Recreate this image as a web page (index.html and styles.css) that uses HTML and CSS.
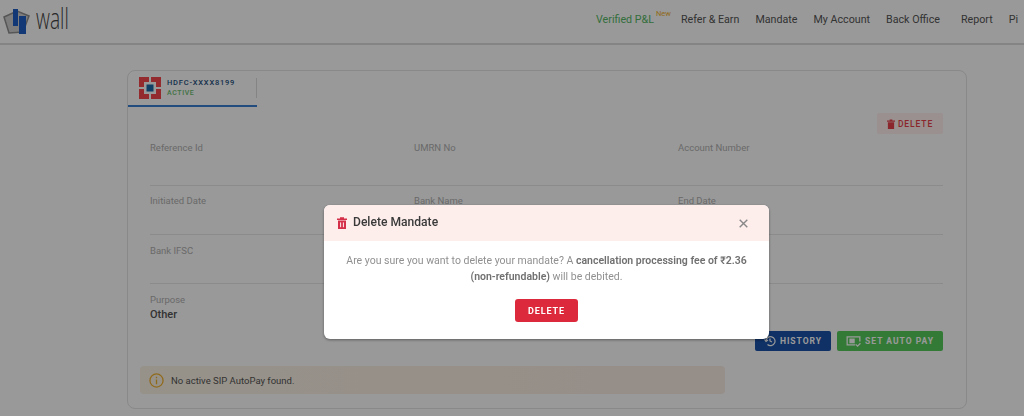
FILE: index.html
```html
<!DOCTYPE html>
<html>
<head>
<meta name="viewport" content="width=device-width, initial-scale=1.0" charset="UTF-8">
<title>Mandate</title>
<link rel="stylesheet" href="styles.css">
</head>
<body>
<div class="header">
	<div class="brand">
		<svg class="brand_logo" width="30" height="32" viewBox="0 0 30 32">
			<path d="M4 14 L17 8 L29 13 L23 29 L9 30 Z" fill="#d0d0d0" stroke="#8f8f8f" stroke-width="1.5"/>
			<rect x="13" y="6" width="5" height="17" fill="#1f5fc4"/>
			<rect x="19" y="13" width="7" height="18" fill="#1f5fc4"/>
		</svg>
		<span class="brand_name">wall</span>
	</div>
	<div class="nav">
		<a class="nav_item nav_green">Verified P&amp;L<sup class="nav_new">New</sup></a>
		<a class="nav_item">Refer &amp; Earn</a>
		<a class="nav_item">Mandate</a>
		<a class="nav_item">My Account</a>
		<a class="nav_item">Back Office</a>
		<a class="nav_item nav_report">Report</a>
		<a class="nav_item">Pi</a>
	</div>
</div>

<div class="card">
	<div class="tab">
		<svg width="22" height="22" viewBox="0 0 22 22">
			<path d="M0 0 H10 V5 H5 V10 H0 Z M12 0 H22 V10 H17 V5 H12 Z M0 12 H5 V17 H10 V22 H0 Z M17 12 H22 V22 H12 V17 H17 Z" fill="#f5484e"/>
			<rect x="7.5" y="7.5" width="7" height="7" fill="#1a6aa8"/>
		</svg>
		<div class="tab_text">
			<div class="tab_name">HDFC-XXXX8199</div>
			<div class="tab_status">ACTIVE</div>
		</div>
		<div class="tab_divider"></div>
	</div>

	<div class="card_body">
		<div class="delete_row">
			<button class="button_soft">
				<svg width="8" height="10" viewBox="0 0 9 11"><path d="M0 1.5 H3 V0.5 H6 V1.5 H9 V3 H0 Z M1 3.5 H8 V11 H1 Z" fill="#e8404a"/></svg>
				DELETE
			</button>
		</div>

		<div class="row row_first">
			<div class="field">Reference Id</div>
			<div class="field">UMRN No</div>
			<div class="field">Account Number</div>
		</div>
		<div class="row">
			<div class="field">Initiated Date</div>
			<div class="field">Bank Name</div>
			<div class="field">End Date</div>
		</div>
		<div class="row row_third">
			<div class="field">Bank IFSC</div>
			<div class="field"></div>
			<div class="field"></div>
		</div>
		<div class="purpose">
			<div class="field">Purpose</div>
			<div class="purpose_value">Other</div>
		</div>

		<div class="actions">
			<button class="button button_blue">
				<svg width="12" height="12" viewBox="0 0 24 24" fill="none" stroke="currentColor" stroke-width="2.4"><path d="M4 12 A9 9 0 1 1 7 19"/><path d="M1 9 L4 13 L8 10"/><path d="M12 7 V12 L16 14"/></svg>
				HISTORY
			</button>
			<button class="button button_green">
				<svg width="15" height="13" viewBox="0 0 26 22" fill="none" stroke="currentColor" stroke-width="2.2"><path d="M16 17 H2 V3 H24 V11"/><rect x="7" y="7" width="7" height="6" fill="currentColor"/><path d="M17 16 L20 19 L25 14"/></svg>
				SET AUTO PAY
			</button>
		</div>

		<div class="alert">
			<svg width="15" height="15" viewBox="0 0 16 16" fill="none" stroke="#f2b230" stroke-width="1.4"><circle cx="8" cy="8" r="7"/><path d="M8 7 V12 M8 4 V5.6"/></svg>
			No active SIP AutoPay found.
		</div>
	</div>
</div>

<div class="overlay"></div>

<div class="modal">
	<div class="modal_head">
		<svg width="10" height="12" viewBox="0 0 10 12"><path d="M0 1.5 H3 V0.3 H7 V1.5 H10 V3 H0 Z M1 3.6 H9 V12 H1 Z" fill="#d5304a"/><path d="M3.6 5.4 V10.2 M6.4 5.4 V10.2" stroke="#fdeeec" stroke-width="1"/></svg>
		<span class="modal_title">Delete Mandate</span>
		<svg class="modal_close" width="9" height="9" viewBox="0 0 9 9"><path d="M0.7 0.7 L8.3 8.3 M8.3 0.7 L0.7 8.3" stroke="#888" stroke-width="1.4"/></svg>
	</div>
	<div class="modal_body">
		<p class="modal_text">Are you sure you want to delete your mandate? A <b>cancellation processing fee of ₹2.36 (non-refundable)</b> will be debited.</p>
		<button class="button_red">DELETE</button>
	</div>
</div>
</body>
</html>
```

FILE: styles.css
```css
html, body {
  margin: 0;
  height: 416px;
  overflow: hidden;
}

body {
  background-color: #fff;
  font-family: Roboto, "Liberation Sans", sans-serif;
  color: #555;
}

.header {
  height: 43px;
  border-bottom: 2px solid #dcdcdc;
  display: flex;
  align-items: center;
  justify-content: space-between;
}

.brand {
  display: flex;
  align-items: center;
  padding-left: 3px;
}

.brand_logo {
  margin-top: -6px;
  margin-left: -3px;
}

.brand_name {
  font-family: "Open Sans", sans-serif;
  font-weight: 300;
  font-size: 30px;
  line-height: 30px;
  margin-left: 6px;
  margin-top: -8px;
  color: #444;
  transform: scaleX(0.64);
  transform-origin: left;
}

.nav {
  display: flex;
  align-items: center;
  padding-right: 6px;
  margin-top: -5px;
}

.nav_item {
  font-size: 10.7px;
  margin-left: 16px;
  color: #555;
  white-space: nowrap;
}

.nav_green {
  color: #55b864;
  margin-top: 1px;
}

.nav_new {
  color: #f2b230;
  font-size: 7.5px;
  margin-left: 2px;
  margin-right: -6px;
  line-height: 0;
  position: relative;
  top: -2px;
}

.nav_report {
  margin-left: 21px;
}

.card {
  margin: 25px 0 0 127px;
  width: 838px;
  height: 337px;
  border: 1px solid #e4e4e4;
  border-radius: 8px;
}

.tab {
  width: 129px;
  height: 36px;
  border-bottom: 2px solid #3a7fd0;
  display: flex;
  align-items: center;
  padding-left: 11px;
  box-sizing: border-box;
}

.tab_text {
  margin-left: 6px;
  margin-top: -2px;
}

.tab_divider {
  margin-left: auto;
  width: 1px;
  height: 20px;
  background-color: #ddd;
}

.tab_name {
  font-size: 7.5px;
  font-weight: 500;
  letter-spacing: 0.8px;
  color: #24507e;
}

.tab_status {
  font-size: 7px;
  font-weight: 500;
  letter-spacing: 0.6px;
  color: #6cc070;
  margin-top: 2px;
}

.card_body {
  padding: 0 23px 0 22px;
}

.delete_row {
  display: flex;
  justify-content: flex-end;
  padding-top: 6px;
}

.button_soft {
  width: 66px;
  height: 21px;
  border: none;
  border-radius: 2px;
  background-color: #fff0ee;
  color: #e8404a;
  font-family: inherit;
  font-size: 8.5px;
  font-weight: 500;
  letter-spacing: 0.9px;
  display: flex;
  align-items: center;
  justify-content: center;
  gap: 3px;
  padding: 0;
}

.row {
  display: grid;
  grid-template-columns: 264px 264px 1fr;
  height: 48px;
  border-bottom: 1px solid #e8e8e8;
}

.row_first {
  height: 51px;
}

.field {
  font-size: 9.5px;
  color: #b0b0b0;
  padding-top: 9px;
}

.row_first .field {
  padding-top: 8px;
}

.row_third .field {
  padding-top: 10px;
}

.purpose .field {
  padding-top: 10px;
}

.purpose_value {
  font-size: 11px;
  font-weight: 500;
  color: #555;
  margin-top: 3px;
}

.actions {
  display: flex;
  justify-content: flex-end;
  gap: 6px;
  margin-top: 10px;
}

.button {
  height: 20px;
  border: none;
  border-radius: 2px;
  color: #fff;
  font-family: inherit;
  font-size: 8.5px;
  font-weight: 700;
  letter-spacing: 1px;
  display: flex;
  align-items: center;
  justify-content: center;
  gap: 4px;
  padding: 0;
}

.button_blue {
  width: 76px;
  background-color: #1a52aa;
}

.button_green {
  width: 106px;
  background-color: #58cc5c;
}

.alert {
  margin: 15px 0 0 -10px;
  width: 585px;
  height: 28px;
  box-sizing: border-box;
  border-radius: 4px;
  background: linear-gradient(to right, #faf3e6, #fbeee4);
  color: #555;
  font-size: 9.5px;
  display: flex;
  align-items: center;
  gap: 7px;
  padding-left: 9px;
}

.overlay {
  position: fixed;
  top: 0;
  left: 0;
  right: 0;
  bottom: 0;
  background-color: rgba(0, 0, 0, 0.4);
}

.modal {
  position: fixed;
  left: 324px;
  top: 205px;
  width: 445px;
  height: 134px;
  background-color: #fff;
  border-radius: 6px;
  box-shadow: 0 1px 3px rgba(0, 0, 0, 0.4);
  overflow: hidden;
}

.modal_head {
  height: 36px;
  background-color: #fdeeec;
  display: flex;
  align-items: center;
  padding: 0 21px 0 13px;
}

.modal_title {
  font-size: 12.1px;
  font-weight: 500;
  color: #3a3a3a;
  margin-left: 6px;
  margin-top: -2px;
}

.modal_close {
  margin-left: auto;
}

.modal_body {
  text-align: center;
  padding-top: 12px;
}

.modal_text {
  margin: 0 auto;
  width: 410px;
  font-size: 10.5px;
  line-height: 16px;
  color: #909090;
}

.modal_text b {
  font-weight: 600;
  color: #707070;
}

.button_red {
  margin-top: 14px;
  width: 63px;
  height: 23px;
  border: none;
  border-radius: 3px;
  background-color: #dc2a3c;
  color: #fff;
  font-family: inherit;
  font-size: 9px;
  font-weight: 700;
  letter-spacing: 0.9px;
  padding: 0;
}
```
